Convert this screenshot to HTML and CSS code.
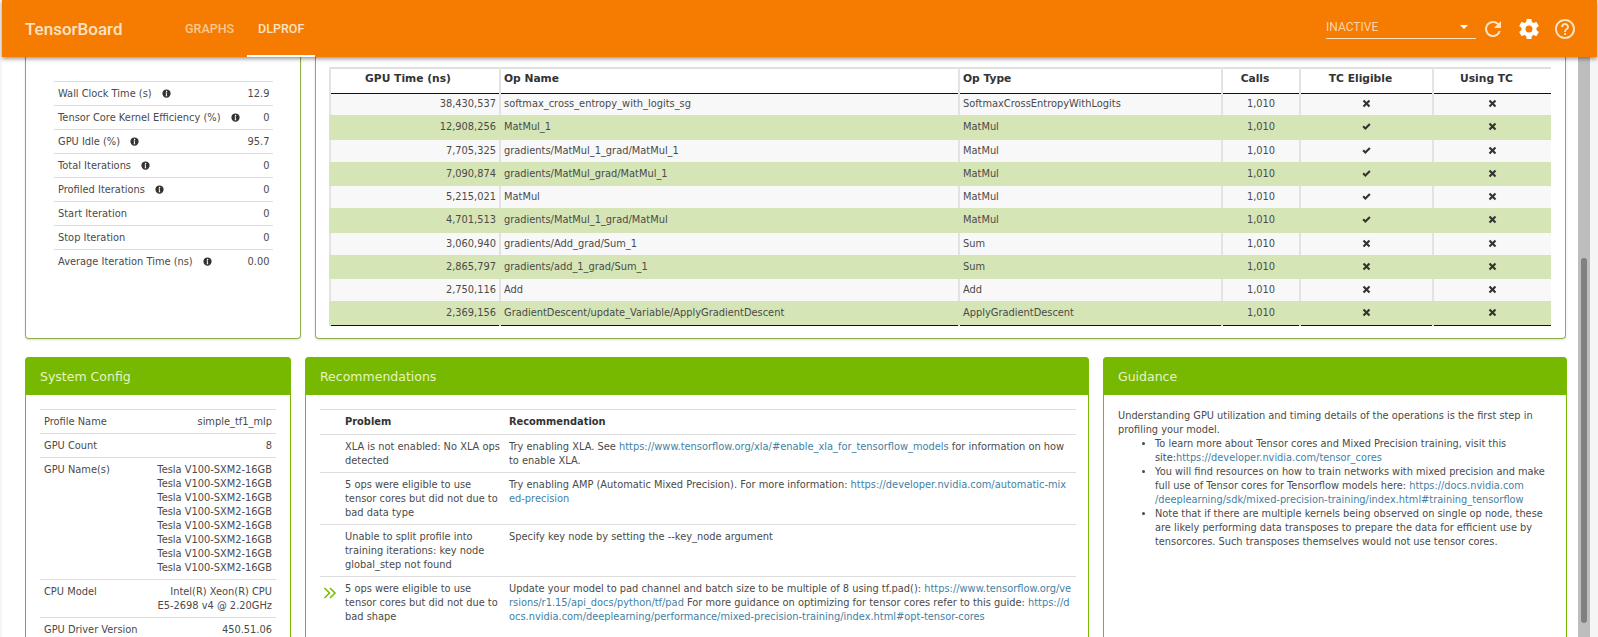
FILE: index.html
```html
<!DOCTYPE html>
<html lang="en">
<head>
  <meta charset="UTF-8" />
  <title>TensorBoard</title>
  <link rel="stylesheet" href="styles.css">
</head>
<body>
  <header class="toolbar">
    <div class="brand">TensorBoard</div>
    <nav class="tabs">
      <a class="tab">GRAPHS</a>
      <a class="tab active">DLPROF</a>
    </nav>
    <div class="spacer"></div>
    <div class="run-select">
      <span>INACTIVE</span>
      <i class="caret"></i>
    </div>
    <svg class="tool" viewBox="0 0 24 24"><path d="M17.65 6.35A7.96 7.96 0 0 0 12 4a8 8 0 1 0 7.73 10h-2.08A6 6 0 1 1 12 6c1.66 0 3.14.69 4.22 1.78L13 11h7V4l-2.35 2.35z"/></svg>
    <svg class="tool gear" viewBox="0 0 24 24"><path d="M19.43 12.98c.04-.32.07-.64.07-.98s-.03-.66-.07-.98l2.11-1.65c.19-.15.24-.42.12-.64l-2-3.46c-.12-.22-.39-.3-.61-.22l-2.49 1c-.52-.4-1.08-.73-1.69-.98l-.38-2.65A.49.49 0 0 0 14 2h-4c-.25 0-.46.18-.49.42l-.38 2.65c-.61.25-1.17.59-1.69.98l-2.49-1c-.23-.09-.49 0-.61.22l-2 3.46c-.13.22-.07.49.12.64l2.11 1.65c-.04.32-.07.65-.07.98s.03.66.07.98l-2.11 1.65c-.19.15-.24.42-.12.64l2 3.46c.12.22.39.3.61.22l2.49-1c.52.4 1.08.73 1.69.98l.38 2.65c.03.24.24.42.49.42h4c.25 0 .46-.18.49-.42l.38-2.65c.61-.25 1.17-.59 1.69-.98l2.49 1c.23.09.49 0 .61-.22l2-3.46c.12-.22.07-.49-.12-.64l-2.11-1.65zM12 15.5A3.5 3.5 0 1 1 12 8.5a3.5 3.5 0 0 1 0 7z"/></svg>
    <svg class="tool" viewBox="0 0 24 24"><path d="M11 18h2v-2h-2v2zm1-16C6.48 2 2 6.48 2 12s4.48 10 10 10 10-4.48 10-10S17.52 2 12 2zm0 18c-4.41 0-8-3.59-8-8s3.59-8 8-8 8 3.59 8 8-3.59 8-8 8zm0-14c-2.21 0-4 1.79-4 4h2c0-1.1.9-2 2-2s2 .9 2 2c0 2-3 1.75-3 5h2c0-2.25 3-2.5 3-5 0-2.21-1.79-4-4-4z"/></svg>
  </header>

  <svg width="0" height="0" class="defs">
    <symbol id="info" viewBox="0 0 24 24"><path d="M12 1a11 11 0 1 0 0 22 11 11 0 0 0 0-22zm2 18.500h-4.500v-2h1v-6h-1v-2H13v8h1v2zM12.300 8.600a2 2 0 1 1 0-4 2 2 0 0 1 0 4z"/></symbol>
    <symbol id="yes" viewBox="0 0 24 24"><path d="M9 21 1 13l4-4 4 4L19 3l4 4z"/></symbol>
    <symbol id="no" viewBox="0 0 24 24"><path d="M6 2l6 6 6-6 4 4-6 6 6 6-4 4-6-6-6 6-4-4 6-6-6-6z"/></symbol>
  </svg>

  <main class="content">
    <div class="row top-row">
      <section class="panel stats-panel">
        <table class="plain stats">
          <tr><td>Wall Clock Time (s)<svg class="info"><use href="#info"/></svg></td><td class="num">12.9</td></tr>
          <tr><td>Tensor Core Kernel Efficiency (%)<svg class="info"><use href="#info"/></svg></td><td class="num">0</td></tr>
          <tr><td>GPU Idle (%)<svg class="info"><use href="#info"/></svg></td><td class="num">95.7</td></tr>
          <tr><td>Total Iterations<svg class="info"><use href="#info"/></svg></td><td class="num">0</td></tr>
          <tr><td>Profiled Iterations<svg class="info"><use href="#info"/></svg></td><td class="num">0</td></tr>
          <tr><td>Start Iteration</td><td class="num">0</td></tr>
          <tr><td>Stop Iteration</td><td class="num">0</td></tr>
          <tr><td>Average Iteration Time (ns)<svg class="info"><use href="#info"/></svg></td><td class="num">0.00</td></tr>
        </table>
      </section>
      <section class="panel ops-panel">
        <table class="ops">
          <colgroup>
            <col class="c-time"><col class="c-name"><col class="c-type"><col class="c-calls"><col class="c-elig"><col class="c-using">
          </colgroup>
          <thead>
            <tr><th class="first">GPU Time (ns)</th><th class="left">Op Name</th><th class="left">Op Type</th><th>Calls</th><th>TC Eligible</th><th>Using TC</th></tr>
          </thead>
          <tbody>
            <tr><td class="num">38,430,537</td><td>softmax_cross_entropy_with_logits_sg</td><td>SoftmaxCrossEntropyWithLogits</td><td class="mid">1,010</td><td class="mid"><svg class="mark"><use href="#no"/></svg></td><td class="mid"><svg class="mark"><use href="#no"/></svg></td></tr>
            <tr class="hit"><td class="num">12,908,256</td><td>MatMul_1</td><td>MatMul</td><td class="mid">1,010</td><td class="mid"><svg class="mark"><use href="#yes"/></svg></td><td class="mid"><svg class="mark"><use href="#no"/></svg></td></tr>
            <tr><td class="num">7,705,325</td><td>gradients/MatMul_1_grad/MatMul_1</td><td>MatMul</td><td class="mid">1,010</td><td class="mid"><svg class="mark"><use href="#yes"/></svg></td><td class="mid"><svg class="mark"><use href="#no"/></svg></td></tr>
            <tr class="hit"><td class="num">7,090,874</td><td>gradients/MatMul_grad/MatMul_1</td><td>MatMul</td><td class="mid">1,010</td><td class="mid"><svg class="mark"><use href="#yes"/></svg></td><td class="mid"><svg class="mark"><use href="#no"/></svg></td></tr>
            <tr><td class="num">5,215,021</td><td>MatMul</td><td>MatMul</td><td class="mid">1,010</td><td class="mid"><svg class="mark"><use href="#yes"/></svg></td><td class="mid"><svg class="mark"><use href="#no"/></svg></td></tr>
            <tr class="hit"><td class="num">4,701,513</td><td>gradients/MatMul_1_grad/MatMul</td><td>MatMul</td><td class="mid">1,010</td><td class="mid"><svg class="mark"><use href="#yes"/></svg></td><td class="mid"><svg class="mark"><use href="#no"/></svg></td></tr>
            <tr><td class="num">3,060,940</td><td>gradients/Add_grad/Sum_1</td><td>Sum</td><td class="mid">1,010</td><td class="mid"><svg class="mark"><use href="#no"/></svg></td><td class="mid"><svg class="mark"><use href="#no"/></svg></td></tr>
            <tr class="hit"><td class="num">2,865,797</td><td>gradients/add_1_grad/Sum_1</td><td>Sum</td><td class="mid">1,010</td><td class="mid"><svg class="mark"><use href="#no"/></svg></td><td class="mid"><svg class="mark"><use href="#no"/></svg></td></tr>
            <tr><td class="num">2,750,116</td><td>Add</td><td>Add</td><td class="mid">1,010</td><td class="mid"><svg class="mark"><use href="#no"/></svg></td><td class="mid"><svg class="mark"><use href="#no"/></svg></td></tr>
            <tr class="hit"><td class="num">2,369,156</td><td>GradientDescent/update_Variable/ApplyGradientDescent</td><td>ApplyGradientDescent</td><td class="mid">1,010</td><td class="mid"><svg class="mark"><use href="#no"/></svg></td><td class="mid"><svg class="mark"><use href="#no"/></svg></td></tr>
          </tbody>
        </table>
      </section>
    </div>

    <div class="row bottom-row">
      <section class="card config-card">
        <h3>System Config</h3>
        <div class="card-body">
          <table class="plain config">
            <tr><td>Profile Name</td><td class="num">simple_tf1_mlp</td></tr>
            <tr><td>GPU Count</td><td class="num">8</td></tr>
            <tr><td>GPU Name(s)</td><td class="num">Tesla V100-SXM2-16GB<br>Tesla V100-SXM2-16GB<br>Tesla V100-SXM2-16GB<br>Tesla V100-SXM2-16GB<br>Tesla V100-SXM2-16GB<br>Tesla V100-SXM2-16GB<br>Tesla V100-SXM2-16GB<br>Tesla V100-SXM2-16GB</td></tr>
            <tr><td>CPU Model</td><td class="num">Intel(R) Xeon(R) CPU<br>E5-2698 v4 @ 2.20GHz</td></tr>
            <tr><td>GPU Driver Version</td><td class="num">450.51.06</td></tr>
          </table>
        </div>
      </section>

      <section class="card rec-card">
        <h3>Recommendations</h3>
        <div class="card-body rec-body">
          <table class="plain recs">
            <colgroup><col class="c-flag"><col class="c-problem"><col></colgroup>
            <tr><th></th><th>Problem</th><th>Recommendation</th></tr>
            <tr>
              <td></td>
              <td>XLA is not enabled: No XLA ops detected</td>
              <td>Try enabling XLA. See <a>https://www.tensorflow.org/xla/#enable_xla_for_tensorflow_models</a> for information on how to enable XLA.</td>
            </tr>
            <tr>
              <td></td>
              <td>5 ops were eligible to use tensor cores but did not due to bad data type</td>
              <td>Try enabling AMP (Automatic Mixed Precision). For more information: <a>https://developer.nvidia.com/automatic-mix<wbr>ed-precision</a></td>
            </tr>
            <tr>
              <td></td>
              <td>Unable to split profile into training iterations: key node global_step not found</td>
              <td>Specify key node by setting the --key_node argument</td>
            </tr>
            <tr>
              <td class="flag"><svg viewBox="0 0 14 14"><path d="M1.500 2 6.500 7l-5 5M7 2l5 5-5 5"/></svg></td>
              <td>5 ops were eligible to use tensor cores but did not due to bad shape</td>
              <td>Update your model to pad channel and batch size to be multiple of 8 using tf.pad(): <a>https://www.tensorflow.org/ve<wbr>rsions/r1.15/api_docs/python/tf/pad</a> For more guidance on optimizing for tensor cores refer to this guide: <a>https://d<wbr>ocs.nvidia.com/deeplearning/performance/mixed-precision-training/index.html#opt-tensor-cores</a></td>
            </tr>
          </table>
        </div>
      </section>

      <section class="card guide-card">
        <h3>Guidance</h3>
        <div class="card-body guide">
          Understanding GPU utilization and timing details of the operations is the first step in profiling your model.
          <ul>
            <li>To learn more about Tensor cores and Mixed Precision training, visit this site:<a>https://developer.nvidia.com/tensor_cores</a></li>
            <li>You will find resources on how to train networks with mixed precision and make full use of Tensor cores for Tensorflow models here: <a>https://docs.nvidia.com<wbr>/deeplearning/sdk/mixed-precision-training/index.html#training_tensorflow</a></li>
            <li>Note that if there are multiple kernels being observed on single op node, these are likely performing data transposes to prepare the data for efficient use by tensorcores. Such transposes themselves would not use tensor cores.</li>
          </ul>
        </div>
      </section>
    </div>
  </main>

  <div class="scrollbar"><div class="thumb"></div></div>
</body>
</html>
```

FILE: styles.css
```css
* {
  box-sizing: border-box;
}
html, body {
  height: 100%;
}
body {
  margin: 0;
  overflow: hidden;
  background: #f5f5f5;
  font-family: "DejaVu Sans", sans-serif;
  font-size: 9.85px;
  line-height: 14px;
  color: #4a4a4a;
  display: grid;
  grid-template-columns: 2px 1576px 20px;
  grid-template-rows: 57px 580px;
}
.defs {
  position: absolute;
}

/* toolbar */
.toolbar {
  grid-column: 2 / 4;
  grid-row: 1;
  display: flex;
  align-items: center;
  height: 57px;
  margin-right: 1px;
  padding: 0 20px 0 23px;
  background: #f57c00;
  color: #fff;
  font-family: Roboto, sans-serif;
  box-shadow: 0 2px 4px rgba(0,0,0,0.4);
  position: relative;
  z-index: 2;
}
.brand {
  font-size: 17px;
  font-weight: 500;
  width: 149px;
  color: #fde3c4;
}
.tabs {
  display: flex;
  gap: 2px;
  height: 57px;
}
.tab {
  height: 57px;
  padding: 0 11px;
  line-height: 57px;
  text-align: center;
  font-size: 12.5px;
  font-weight: 500;
  color: #fbc98f;
  border-bottom: 2px solid transparent;
}
.tab.active {
  color: #fde3c4;
  border-bottom-color: #fff;
}
.spacer {
  flex: 1;
}
.run-select {
  width: 150px;
  height: 24px;
  margin-top: -3px;
  display: flex;
  align-items: center;
  justify-content: space-between;
  padding-right: 8px;
  border-bottom: 1px solid #fde3c4;
  font-size: 12px;
  color: #fcd4a6;
}
.caret {
  border: 4px solid transparent;
  border-top: 4px solid #fff;
  border-bottom: 0;
}
.tool {
  width: 24px;
  height: 24px;
  margin-left: 12px;
  fill: #fde3c4;
}
.run-select + .tool {
  margin-left: 5px;
}
.tool.gear {
  fill: #fff;
}

/* page content */
.content {
  grid-column: 2;
  grid-row: 2;
  background: #fff;
  padding: 0 12px 0 23px;
  overflow: hidden;
}
.row {
  display: flex;
}
.top-row {
  gap: 14px;
  height: 282px;
}
.panel {
  border: 1px solid #8fb04a;
  border-top: 0;
  border-radius: 0 0 4px 4px;
  box-shadow: 0 1px 2px rgba(0,0,0,0.15);
}
.stats-panel {
  width: 276px;
  padding: 24px 28px 0 28px;
}
.ops-panel {
  flex: 1;
  padding: 10px 14px 0 13px;
}
.bottom-row {
  gap: 14px;
  margin-top: 18px;
}
.card {
  height: 400px;
  border: 1px solid #76b900;
  border-radius: 4px 4px 0 0;
}
.card h3 {
  margin: -1px -1px 0;
  height: 38px;
  line-height: 39px;
  padding: 0 15px;
  font-size: 12.5px;
  font-weight: 400;
  color: #e6f5c4;
  background: #76b900;
  border-radius: 4px 4px 0 0;
}
.card-body {
  padding: 14px;
}
.rec-body {
  padding-right: 12px;
}
.config-card {
  width: 266px;
}
.rec-card {
  width: 784px;
}
.guide-card {
  flex: 1;
  margin-right: -1px;
}

/* tables */
table {
  border-collapse: collapse;
  width: 100%;
}
td, th {
  vertical-align: top;
}
.plain td, .plain th {
  padding: 5px 4px 4px;
  border-top: 1px solid #ddd;
  text-align: left;
}
.plain .num {
  text-align: right;
}
.stats td {
  height: 24px;
  white-space: nowrap;
}
.info {
  width: 9px;
  height: 9px;
  margin-left: 10px;
  fill: #333;
  vertical-align: -1px;
}
.recs th {
  color: #333;
  font-weight: 700;
  padding-bottom: 5px;
}
.recs td:first-child, .recs th:first-child {
  padding: 0;
}
.c-flag {
  width: 21px;
}
.c-problem {
  width: 164px;
}
.flag svg {
  display: block;
  width: 14px;
  height: 14px;
  margin: 9px 0 0 3px;
  fill: none;
  stroke: #76b900;
  stroke-width: 1.5;
}
a {
  color: #3f7fa5;
}
.guide {
  font-size: 9.8px;
}

/* ops table */
.ops {
  table-layout: fixed;
  border-top: 2px solid #e0e0e0;
  border-bottom: 1px solid #111;
}
.c-time { width: 170px; }
.c-name { width: 459px; }
.c-type { width: 263px; }
.c-calls { width: 78px; }
.c-elig { width: 133px; }
.ops th {
  height: 25px;
  padding: 0 16px 3px 4px;
  vertical-align: middle;
  font-size: 10.7px;
  color: #333;
  border-left: 2px solid #e3e3e3;
  border-bottom: 1px solid #111;
  background: #fff;
}
.ops th.first {
  padding-right: 18px;
}
.ops th.left {
  padding: 0 4px 3px 3px;
  text-align: left;
}
.ops td {
  height: 22px;
  padding: 0 3px;
  vertical-align: middle;
  border-left: 2px solid #e3e3e3;
  background: #f8f8f9;
  white-space: nowrap;
}
.ops tr.hit td {
  height: 24.5px;
  background: #d6e5b5;
  border-left-color: #d6e5b5;
}
.ops .num {
  text-align: right;
}
.ops .mid {
  text-align: center;
}
.mark {
  width: 9px;
  height: 9px;
  fill: #333;
  vertical-align: -1px;
}

/* guidance */
.guide ul {
  margin: 0;
  padding-left: 37px;
}

/* scrollbar */
.scrollbar {
  grid-column: 3;
  grid-row: 2;
  width: 12px;
  background: #bdbdbd;
  position: relative;
}
.thumb {
  position: absolute;
  top: 201px;
  bottom: 14px;
  left: 3px;
  width: 6px;
  border-radius: 3px;
  background: #808080;
}
```
